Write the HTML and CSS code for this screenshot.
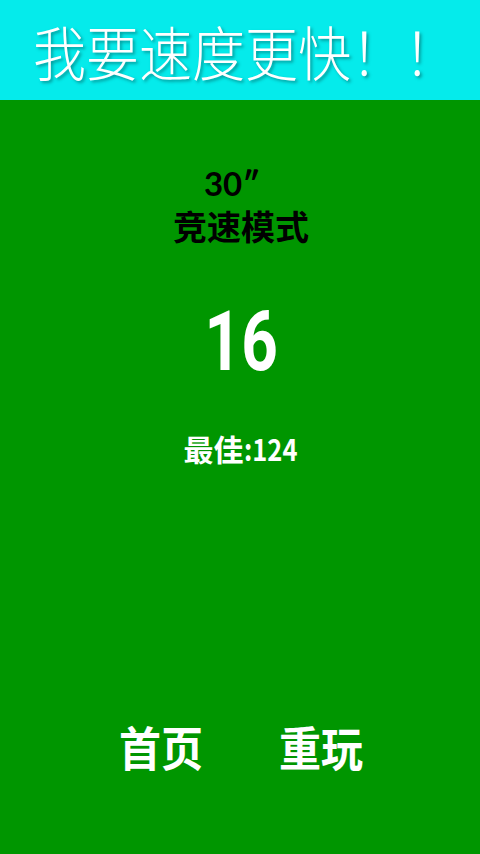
FILE: index.html
```html
<!DOCTYPE html>
<html lang="zh">
<head>
<meta charset="utf-8">
<link rel="stylesheet" href="styles.css">
</head>
<body>
<div class="app">
  <header class="header"><h1 class="title">我要速度更快！！</h1></header>
  <main class="main">
    <div class="mode">
      <div class="time">30″</div>
      <div class="mode-name">竞速模式</div>
    </div>
    <div class="score">16</div>
    <div class="best">最佳<span class="best-num">:124</span></div>
    <div class="spacer"></div>
    <nav class="actions">
      <span class="btn">首页</span>
      <span class="btn">重玩</span>
    </nav>
  </main>
</div>
</body>
</html>
```
FILE: styles.css
```css
html, body {
  margin: 0;
  padding: 0;
  height: 100%;
}
body {
  font-family: "Noto Sans CJK SC", "Noto Sans", sans-serif;
  background: #009600;
}
.app {
  display: flex;
  flex-direction: column;
  width: 480px;
  height: 854px;
}
.header {
  height: 100px;
  background: #05ebeb;
  display: flex;
  align-items: center;
  padding-left: 33px;
  box-sizing: border-box;
}
.title {
  margin: 0;
  font-size: 53px;
  font-weight: 300;
  color: #fff;
  line-height: 1;
  transform: scaleY(1.12);
  transform-origin: left center;
  text-shadow: 2px 2px 3px rgba(0, 0, 0, 0.35);
}
.main {
  flex: 1;
  display: flex;
  flex-direction: column;
  align-items: center;
  padding-left: 2px;
}
.mode {
  margin-top: 62px;
  display: flex;
  flex-direction: column;
  align-items: center;
}
.time {
  font-family: "Lato", "Noto Sans", sans-serif;
  font-weight: 700;
  font-size: 33px;
  line-height: 42px;
  color: #000;
  margin-right: 18px;
}
.mode-name {
  font-size: 34px;
  font-weight: 700;
  line-height: 44px;
  color: #000;
}
.score {
  margin-top: 44px;
  font-family: "Roboto", "Noto Sans", sans-serif;
  font-weight: 700;
  font-size: 84px;
  line-height: 100px;
  color: #fff;
  transform: scaleX(0.76);
}
.best {
  margin-top: 36px;
  font-size: 30px;
  font-weight: 700;
  line-height: 40px;
  color: #fff;
}
.best-num {
  display: inline-block;
  transform: scaleX(0.85);
  transform-origin: left center;
  margin-right: -8px;
}
.spacer {
  flex: 1;
}
.actions {
  display: flex;
  gap: 76px;
  margin-bottom: 80px;
}
.btn {
  font-size: 42px;
  font-weight: 700;
  line-height: 56px;
  color: #fff;
  display: inline-block;
  transform: scaleY(1.1);
}
```
